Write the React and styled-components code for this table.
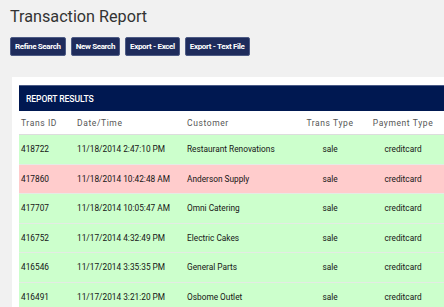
import React from "react";
import styled, { createGlobalStyle } from "styled-components";

const Global = createGlobalStyle`
  html, body {
    margin: 0;
    padding: 0;
    background: #f1f1f1;
    overflow: hidden;
  }
  body {
    font-family: Roboto, "Liberation Sans", Arial, sans-serif;
    color: #222;
  }
`;

const Page = styled.div`
  padding: 6px 0 0 10px;
  width: 480px;
`;

const Title = styled.h1`
  margin: 0;
  font-size: 16.2px;
  line-height: 22px;
  font-weight: 400;
  color: #333;
`;

const Toolbar = styled.div`
  display: flex;
  gap: 5px;
  margin-top: 9px;
`;

const Button = styled.button`
  height: 19px;
  padding: 0 4px;
  background: #1f2c5c;
  border: 1px solid #4d5b85;
  border-radius: 2px;
  color: #fff;
  font-family: Roboto, "Liberation Sans", Arial, sans-serif;
  font-size: 8px;
  font-weight: 700;
  letter-spacing: -0.35px;
  white-space: nowrap;
  cursor: pointer;
`;

const Panel = styled.section`
  margin: 21px 0 0 2px;
  background: #fff;
  padding: 8px 0 0 7px;
`;

const PanelHeader = styled.div`
  height: 25px;
  display: flex;
  align-items: center;
  padding-left: 7px;
  background: #001851;
  border-top: 1px solid #4a5a86;
  color: #fff;
  font-size: 8.6px;
  font-weight: 500;
  letter-spacing: -0.1px;
  text-transform: uppercase;
`;

const Grid = styled.div`
  display: grid;
  grid-template-columns: 56px 110px 109px 72px 74px;
`;

const Row = styled(Grid)`
  height: ${(p) => (p.$head ? "24px" : "29.5px")};
  background: ${(p) =>
    p.$head ? "#fff" : p.$status === "declined" ? "#ffcccc" : "#ccffcc"};
  border-bottom: 1px solid ${(p) => (p.$head ? "#dddddd" : "#e4ebe4")};
  box-sizing: border-box;
`;

const Cell = styled.div`
  display: flex;
  align-items: center;
  justify-content: ${(p) => (p.$center ? "center" : "flex-start")};
  padding-left: ${(p) => (p.$center ? "0" : "2px")};
  font-size: ${(p) => (p.$head ? "8.5px" : "8.3px")};
  letter-spacing: ${(p) => (p.$head ? "0.6px" : "0")};
  color: ${(p) => (p.$head ? "#555" : "#151515")};
  white-space: nowrap;
  overflow: hidden;
`;

const columns = [
  { key: "id", label: "Trans ID" },
  { key: "date", label: "Date/Time" },
  { key: "customer", label: "Customer" },
  { key: "type", label: "Trans Type", center: true },
  { key: "payment", label: "Payment Type", center: true },
];

const rows = [
  { id: "418722", date: "11/18/2014 2:47:10 PM", customer: "Restaurant Renovations", type: "sale", payment: "creditcard", status: "approved" },
  { id: "417860", date: "11/18/2014 10:42:48 AM", customer: "Anderson Supply", type: "sale", payment: "creditcard", status: "declined" },
  { id: "417707", date: "11/18/2014 10:05:47 AM", customer: "Omni Catering", type: "sale", payment: "creditcard", status: "approved" },
  { id: "416752", date: "11/17/2014 4:32:49 PM", customer: "Electric Cakes", type: "sale", payment: "creditcard", status: "approved" },
  { id: "416546", date: "11/17/2014 3:35:35 PM", customer: "General Parts", type: "sale", payment: "creditcard", status: "approved" },
  { id: "416491", date: "11/17/2014 3:21:20 PM", customer: "Osbome Outlet", type: "sale", payment: "creditcard", status: "approved" },
];

export default function App() {
  return (
    <Page>
      <Global />
      <Title>Transaction Report</Title>
      <Toolbar>
        <Button>Refine Search</Button>
        <Button>New Search</Button>
        <Button>Export - Excel</Button>
        <Button>Export - Text File</Button>
      </Toolbar>
      <Panel>
        <PanelHeader>Report Results</PanelHeader>
        <Row $head>
          {columns.map((c) => (
            <Cell key={c.key} $head $center={c.center}>
              {c.label}
            </Cell>
          ))}
        </Row>
        {rows.map((r) => (
          <Row key={r.id} $status={r.status}>
            {columns.map((c) => (
              <Cell key={c.key} $center={c.center}>
                {r[c.key]}
              </Cell>
            ))}
          </Row>
        ))}
      </Panel>
    </Page>
  );
}
